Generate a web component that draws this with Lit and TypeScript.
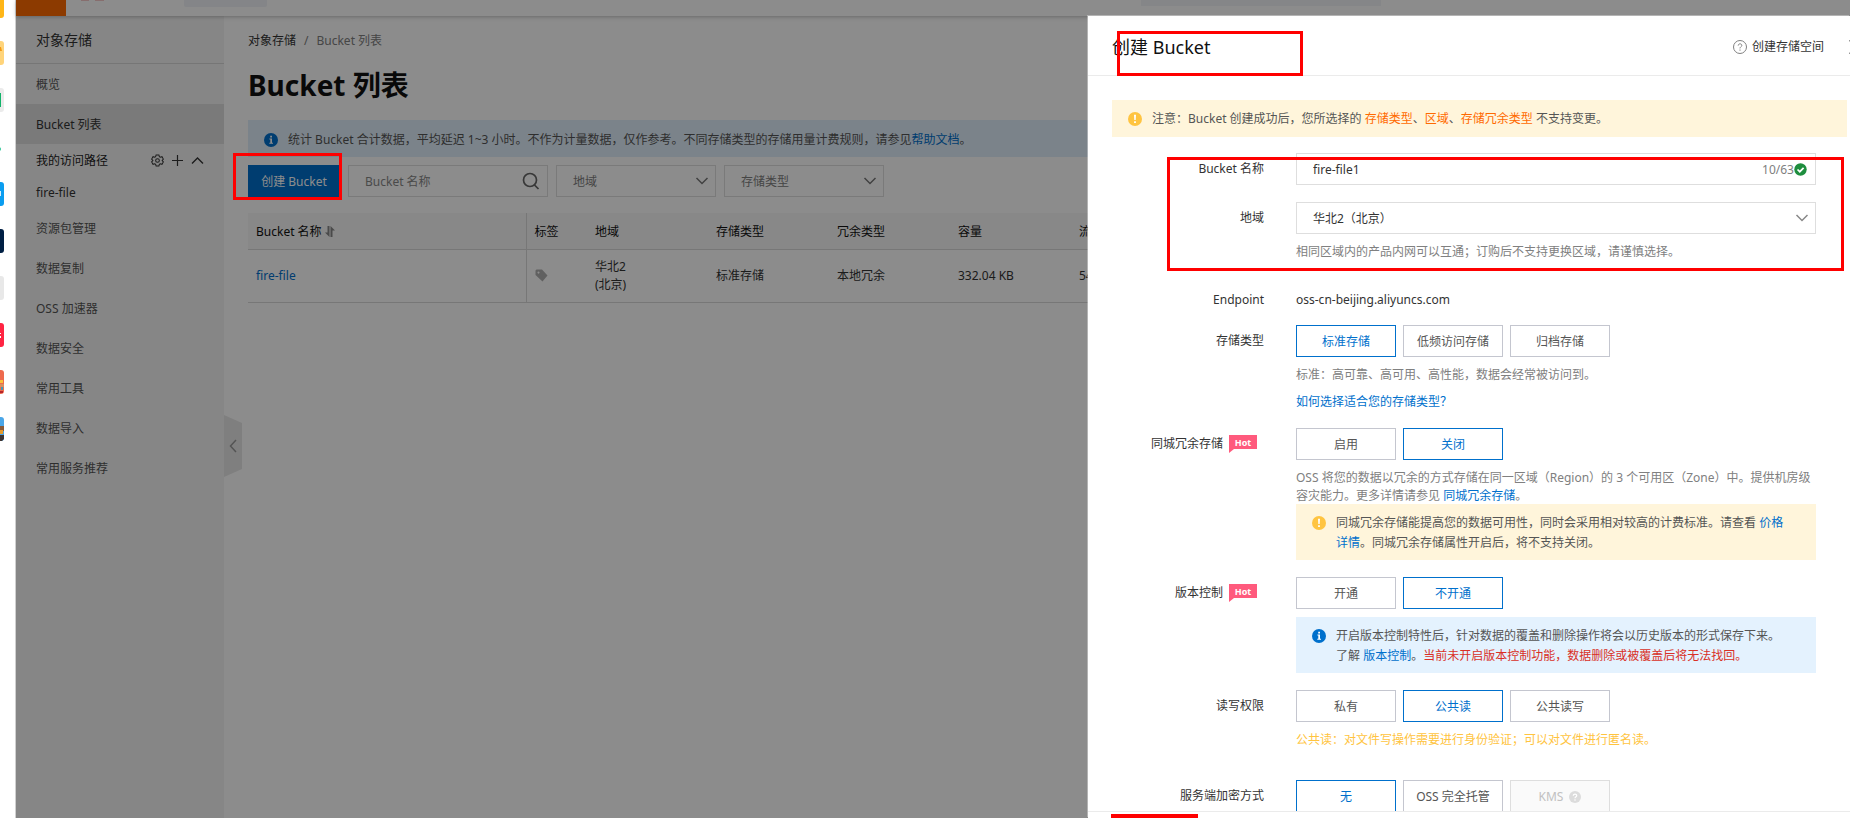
import { LitElement, html, css, svg, nothing } from "lit";
import { customElement, property, state } from "lit/decorators.js";
import { classMap } from "lit/directives/class-map.js";

const base = css`
  *, *::before, *::after { box-sizing: border-box; }
  button, input, select { font: inherit; color: inherit; margin: 0; border-radius: 0; }
  button { background: none; border: 0; padding: 0; cursor: pointer; }
  a { color: #0070cc; text-decoration: none; }
  svg { display: block; flex: none; }
`;

const chevron = (w = 14) => html`<svg width=${w} height="10" viewBox="0 0 14 10" fill="none" stroke="currentColor" stroke-width="1.5"><path d="M1.5 2 7 7.5 12.5 2" /></svg>`;
const infoIcon = html`<svg width="14" height="14" viewBox="0 0 14 14"><circle cx="7" cy="7" r="7" fill="#0070cc" /><path d="M5.4 5.6h2.6v4.2h1v1H5.3v-1h1V6.6h-.9zM6.2 2.8h1.8v1.7H6.2z" fill="#fff" /></svg>`;
const warnIcon = html`<svg width="14" height="14" viewBox="0 0 14 14"><circle cx="7" cy="7" r="7" fill="#ffc440" /><path d="M6 2.8h2L7.7 8H6.3zM6.1 9.2h1.8V11H6.1z" fill="#fff" /></svg>`;

@customElement("dock-strip")
class DockStrip extends LitElement {
  static styles = [base, css`
    :host { display: flex; flex-direction: column; gap: 23px; width: 16px; flex: none; background: #fff; border-right: 1px solid #d0d0d0; overflow: hidden; }
    svg:first-child { margin-top: -6px; }
  `];
  private tiles = [
    svg`<path d="M0 0h1a3 3 0 0 1 3 3v18a3 3 0 0 1-3 3H0z" fill="#ffb617"/>`,
    svg`<path d="M0 0h1a3 3 0 0 1 3 3v18a3 3 0 0 1-3 3H0z" fill="#ffd47a"/><path d="M0 6h1l1 4H0z" fill="#f59a14"/>`,
    svg`<path d="M0 0h1a3 3 0 0 1 3 3v18a3 3 0 0 1-3 3H0z" fill="#ebebeb"/><path d="M0 5h1v14H0z" fill="#12b36a"/>`,
    svg`<circle cx="-1" cy="14" r="2" fill="#36c99c"/>`,
    svg`<path d="M0 0h1a3 3 0 0 1 3 3v18a3 3 0 0 1-3 3H0z" fill="#0a9df0"/><path d="M0 9h1v5H0z" fill="#d6efff"/>`,
    svg`<path d="M0 0h1a3 3 0 0 1 3 3v18a3 3 0 0 1-3 3H0z" fill="#001f44"/>`,
    svg`<path d="M0 0h1a3 3 0 0 1 3 3v18a3 3 0 0 1-3 3H0z" fill="#e8e8e8"/>`,
    svg`<path d="M0 0h1a3 3 0 0 1 3 3v18a3 3 0 0 1-3 3H0z" fill="#ff2442"/><path d="M0 10h1v1H0zM0 13h1v2H0z" fill="#fff"/>`,
    svg`<path d="M0 0h1a3 3 0 0 1 3 3v18a3 3 0 0 1-3 3H0z" fill="#ee6a4d"/><path d="M0 10h3v3H0z" fill="#f9c23b"/><path d="M0 14h4v3H0z" fill="#d98f62"/><path d="M1 17h2v3H1z" fill="#3f9bb8"/><path d="M0 21h3v2H0z" fill="#b5252b"/>`,
    svg`<path d="M0 0h1a3 3 0 0 1 3 3v18a3 3 0 0 1-3 3H0z" fill="#4aa6e8"/><path d="M0 9h4v5H0z" fill="#8a5a38"/><path d="M0 13h3v4H0z" fill="#e59a2c"/><path d="M0 18h4v4l-2 2H0z" fill="#3d3432"/>`,
  ];
  render() {
    return this.tiles.map((t) => html`<svg width="4" height="24" viewBox="0 0 4 24" aria-hidden="true">${t}</svg>`);
  }
}

@customElement("side-nav")
class SideNav extends LitElement {
  static styles = [base, css`
    :host { display: block; width: 208px; flex: none; background: #f5f5f5; color: #555; }
    .product { height: 48px; padding: 0 20px; line-height: 48px; font-size: 14px; color: #333; border-bottom: 1px solid #d8d8d8; }
    .item { display: block; height: 40px; padding: 0 20px; line-height: 42px; color: #555; }
    .item.active { background: #dedede; color: #333; }
    .path { display: flex; align-items: center; height: 33px; padding: 0 20px; color: #222; }
    .path span { flex: 1; }
    .tools { display: flex; gap: 7px; color: #333; }
    .saved { display: block; height: 31px; line-height: 31px; padding: 0 20px; color: #333; }
  `];
  render() {
    const rest = ["资源包管理", "数据复制", "OSS 加速器", "数据安全", "常用工具", "数据导入", "常用服务推荐"];
    return html`
      <div class="product">对象存储</div>
      <nav>
        <a class="item" href="#overview">概览</a>
        <a class="item active" href="#buckets">Bucket 列表</a>
        <div class="path">
          <span>我的访问路径</span>
          <div class="tools">
            <button aria-label="设置"><svg width="13" height="13" viewBox="0 0 14 14" fill="none" stroke="currentColor" stroke-width="1.1"><path d="M5.5 1h3l.5 1.8 1 .6 1.8-.5L13.3 5.500 12 7l1.300 1.500-1.500 2.600-1.800-.5-1 .6-.5 1.800h-3L5 11.200l-1-.6-1.800.5L.7 8.500 2 7 .7 5.500l1.500-2.600 1.800.5 1-.6z"/><circle cx="7" cy="7" r="2"/></svg></button>
            <button aria-label="添加"><svg width="13" height="13" viewBox="0 0 13 13" stroke="currentColor" stroke-width="1.2"><path d="M6.500 1v11M1 6.500h11"/></svg></button>
            <button aria-label="收起"><svg width="13" height="13" viewBox="0 0 13 13" fill="none" stroke="currentColor" stroke-width="1.400"><path d="M1 9.500 6.500 4 12 9.500"/></svg></button>
          </div>
        </div>
        <a class="saved" href="#fire-file">fire-file</a>
        ${rest.map((r) => html`<a class="item" href="#nav">${r}</a>`)}
      </nav>`;
  }
}

@customElement("bucket-list")
class BucketList extends LitElement {
  static styles = [base, css`
    :host { display: block; flex: 1; min-width: 0; background: #fff; color: #333; padding: 0 24px; overflow: hidden; }
    .crumbs { display: flex; gap: 8px; padding-top: 16px; line-height: 18px; }
    .crumbs a { color: #333; }
    .crumbs span { color: #808080; }
    h1 { margin: 16px 0 16px; font-size: 28px; line-height: 38px; color: #111; font-weight: 700; }
    .banner { display: flex; align-items: center; gap: 10px; height: 37px; padding: 2px 16px 0; background: #e1effb; color: #555; white-space: nowrap; }
    .toolbar { display: flex; gap: 8px; margin-top: 8px; }
    .create { width: 92px; height: 32px; padding-top: 2px; background: #0070cc; color: #fff; }
    .search { display: flex; align-items: center; width: 200px; height: 32px; border: 1px solid #dedede; padding: 0 7px 0 16px; }
    .search input { flex: 1; min-width: 0; border: 0; outline: 0; padding: 2px 0 0; background: none; }
    .search input::placeholder { color: #888; opacity: 1; }
    .pick { display: grid; width: 160px; height: 32px; align-items: center; color: #777; }
    .pick > * { grid-area: 1 / 1; }
    .pick select { appearance: none; width: 100%; height: 32px; border: 1px solid #dedede; background: none; padding: 2px 16px 0; color: #808080; }
    .pick svg { justify-self: end; margin-right: 7px; pointer-events: none; }
    table { margin-top: 16px; width: 1200px; table-layout: fixed; border-collapse: collapse; line-height: 18px; }
    th { height: 36px; background: #f7f7f7; text-align: left; font-weight: 400; padding: 2px 8px 0; border-bottom: 1px solid #d9d9d9; color: #111; }
    td { height: 53px; padding: 0 8px; border-bottom: 1px solid #d9d9d9; }
    .name { width: 278px; border-right: 1px solid #d9d9d9; }
    .tag { width: 61px; }
    .tag svg { color: #b0b0b0; }
    .sort { display: flex; align-items: center; gap: 3px; }
    .col { width: 121px; }
  `];
  render() {
    return html`
      <div class="crumbs"><a href="#oss">对象存储</a><span>/</span><span>Bucket 列表</span></div>
      <h1>Bucket 列表</h1>
      <div class="banner">${infoIcon}<span>统计 Bucket 合计数据，平均延迟 1~3 小时。不作为计量数据，仅作参考。不同存储类型的存储用量计费规则，请参见<a href="#help">帮助文档</a>。</span></div>
      <div class="toolbar">
        <button class="create">创建 Bucket</button>
        <div class="search"><input aria-label="Bucket 名称" placeholder="Bucket 名称" />
          <svg width="18" height="18" viewBox="0 0 18 18" fill="none" stroke="#666" stroke-width="1.700"><circle cx="8" cy="8" r="6.500"/><path d="m12.500 13 4 4"/></svg></div>
        <div class="pick"><select aria-label="地域"><option>地域</option></select>${chevron()}</div>
        <div class="pick"><select aria-label="存储类型"><option>存储类型</option></select>${chevron()}</div>
      </div>
      <table>
        <thead><tr>
          <th class="name"><span class="sort">Bucket 名称 <svg width="10" height="11" viewBox="0 0 10 11" fill="#888"><path d="M2.500 0h2v11L0 6.500h2.500zM5.500 0 10 4.500H7.500V11h-2z"/></svg></span></th>
          <th class="tag">标签</th><th class="col">地域</th><th class="col">存储类型</th><th class="col">冗余类型</th><th class="col">容量</th><th>流量</th>
        </tr></thead>
        <tbody><tr>
          <td class="name"><a href="#fire-file">fire-file</a></td>
          <td class="tag"><svg width="13" height="13" viewBox="0 0 13 13" fill="currentColor" fill-rule="evenodd"><path d="M1.500.5H7L12.500 6.500 7.500 12.500 0.500 6V1.500zM3.500 2.500a1 1 0 1 0 .01 0z"/></svg></td>
          <td>华北2<br />(北京)</td><td>标准存储</td><td>本地冗余</td><td>332.04 KB</td><td>54.10 KB</td>
        </tr></tbody>
      </table>`;
  }
}

@customElement("choice-group")
class ChoiceGroup extends LitElement {
  static styles = [base, css`
    .group { display: flex; gap: 7px; }
    button { display: flex; align-items: center; justify-content: center; gap: 6px; min-width: 100px; height: 32px; padding: 2px 12px 0; border: 1px solid #c4c6cf; color: #555; background: #fff; white-space: nowrap; }
    .on { border-color: #0070cc; color: #0070cc; }
    button:disabled { background: #fafafa; border-color: #dedede; color: #c1c1c1; cursor: not-allowed; }
  `];
  @property() label = "";
  @property({ attribute: false }) options: string[] = [];
  @property() value = "";
  @property() off = "";
  render() {
    return html`<div class="group" role="group" aria-label=${this.label}>${this.options.map((o) => html`
      <button class=${classMap({ on: o === this.value })} aria-pressed=${o === this.value} ?disabled=${o === this.off} @click=${() => (this.value = o)}>${o}${o === this.off ? html`
        <svg width="12" height="12" viewBox="0 0 12 12"><circle cx="6" cy="6" r="6" fill="#dcdcdc"/><path d="M4.300 4.800C4.300 2.600 7.800 2.700 7.700 4.700 7.700 5.700 6 5.900 6 7.300" fill="none" stroke="#fff" stroke-width="1.200"/><circle cx="6" cy="9" r=".8" fill="#fff"/></svg>` : nothing}</button>`)}</div>`;
  }
}

@customElement("create-drawer")
class CreateDrawer extends LitElement {
  static styles = [base, css`
    :host { display: flex; flex-direction: column; background: #fff; color: #333; box-shadow: -1px -1px 0 rgba(255, 255, 255, .35); }
    header { display: flex; align-items: center; flex: none; height: 60px; padding: 2px 0 0 24px; border-bottom: 1px solid #ebebeb; overflow: hidden; }
    h2 { flex: 1; margin: 0; font-size: 18px; font-weight: 400; line-height: 24px; color: #111; }
    .help { display: flex; align-items: center; gap: 5px; color: #333; }
    .close { width: 1px; margin-left: 25px; overflow: hidden; color: #999; }
    .body { flex: 1; min-height: 0; overflow: hidden; padding: 24px 3px 0 24px; }
    .note { display: flex; gap: 10px; padding: 9px 24px 7px 16px; line-height: 20px; color: #555; }
    .note svg { margin-top: 3px; }
    .warn { background: #fff5db; }
    .info { background: #e4f2fe; }
    .top { height: 37px; }
    .hot-text { color: #ff6a00; }
    .danger { color: #d93026; }
    form { display: flex; flex-direction: column; gap: 17px; padding: 16px 31px 0 0; }
    .row { display: grid; grid-template-columns: 152px minmax(0, 1fr); column-gap: 32px; }
    .label { text-align: right; line-height: 32px; }
    .row.plain { line-height: 16px; }
    .plain .label { line-height: 16px; }
    .spaced { padding-bottom: 15px; }
    .field { display: flex; align-items: center; height: 32px; border: 1px solid #dedede; padding: 0 8px 0 16px; color: #808080; }
    .field input { flex: 1; min-width: 0; border: 0; outline: 0; padding: 2px 0 0; color: #333; background: none; }
    .field span { padding-top: 2px; }
    .pick { display: grid; align-items: center; color: #888; }
    .pick > * { grid-area: 1 / 1; }
    .pick select { appearance: none; width: 100%; height: 32px; border: 1px solid #dedede; background: none; padding: 2px 16px 0; color: #333; }
    .pick svg { justify-self: end; margin-right: 7px; pointer-events: none; }
    .hint { margin: 9px 0 -1px; line-height: 18px; color: #808080; }
    .link { margin: 10px 0 0; line-height: 18px; }
    .public { color: #ffc440; }
    .gap { margin-top: 8px; }
    .badged { display: flex; justify-content: flex-end; align-items: flex-start; gap: 6px; padding-right: 7px; }
    .badge { height: 14px; width: 28px; margin-top: 7px; background: #ff5a7d; color: #fff; font-size: 9px; font-weight: 700; line-height: 15px; text-align: center; }
    .badge::after { content: ""; display: block; width: 5px; height: 4px; margin-top: -1px; background: #ff5a7d; clip-path: polygon(0 0, 100% 0, 0 100%); }
    footer { flex: none; height: 7px; border-top: 1px solid #ebebeb; background: #fff; }
    .mark { position: absolute; border: 3px solid #f00; pointer-events: none; }
    .m-title { left: 29px; top: 15px; width: 186px; height: 45px; }
    .m-form { left: 79px; right: 6px; top: 141px; height: 114px; }
    .m-foot { left: 23px; bottom: 0; width: 87px; height: 4px; border: 0; background: #f00; }
  `];
  @state() private name = "fire-file1";
  render() {
    return html`
      <header>
        <h2>创建 Bucket</h2>
        <a class="help" href="#help"><svg width="14" height="14" viewBox="0 0 14 14" fill="none" stroke="#808080"><circle cx="7" cy="7" r="6.500"/><path d="M5.200 5.600c0-2.400 3.700-2.300 3.600-.1C8.800 6.700 7 6.800 7 8.400M7 9.500v1.200"/></svg>创建存储空间</a>
        <button class="close" aria-label="关闭"><svg width="14" height="14" viewBox="0 0 14 14" stroke="currentColor" stroke-width="1.500"><path d="m0 0 14 14M14 0 0 14"/></svg></button>
      </header>
      <div class="body">
        <div class="note warn top">${warnIcon}<span>注意：Bucket 创建成功后，您所选择的 <span class="hot-text">存储类型</span>、<span class="hot-text">区域</span>、<span class="hot-text">存储冗余类型</span> 不支持变更。</span></div>
        <form @submit=${(e: Event) => e.preventDefault()}>
          <div class="row">
            <label class="label" for="name">Bucket 名称</label>
            <div class="field"><input id="name" .value=${this.name} maxlength="63" @input=${(e: InputEvent) => (this.name = (e.target as HTMLInputElement).value)} /><span>${this.name.length}/63</span>
              <svg width="13" height="13" viewBox="0 0 13 13"><circle cx="6.500" cy="6.500" r="6.200" fill="#1e8e3e"/><path d="m3.500 6.500 2.300 2.200L9.600 4.900" fill="none" stroke="#fff" stroke-width="1.700"/></svg></div>
          </div>
          <div class="row spaced">
            <label class="label" for="region">地域</label>
            <div><div class="pick"><select id="region"><option>华北2（北京）</option></select>${chevron()}</div>
              <p class="hint">相同区域内的产品内网可以互通；订购后不支持更换区域，请谨慎选择。</p></div>
          </div>
          <div class="row plain"><span class="label">Endpoint</span><span>oss-cn-beijing.aliyuncs.com</span></div>
          <div class="row">
            <span class="label">存储类型</span>
            <div><choice-group label="存储类型" .options=${["标准存储", "低频访问存储", "归档存储"]} value="标准存储"></choice-group>
              <p class="hint">标准：高可靠、高可用、高性能，数据会经常被访问到。</p>
              <p class="link"><a href="#types">如何选择适合您的存储类型？</a></p></div>
          </div>
          <div class="row">
            <span class="label badged">同城冗余存储<span class="badge">Hot</span></span>
            <div><choice-group label="同城冗余存储" .options=${["启用", "关闭"]} value="关闭"></choice-group>
              <p class="hint">OSS 将您的数据以冗余的方式存储在同一区域（Region）的 3 个可用区（Zone）中。提供机房级容灾能力。更多详情请参见 <a href="#zrs">同城冗余存储</a>。</p>
              <div class="note warn">${warnIcon}<span>同城冗余存储能提高您的数据可用性，同时会采用相对较高的计费标准。请查看 <a href="#price">价格详情</a>。同城冗余存储属性开启后，将不支持关闭。</span></div></div>
          </div>
          <div class="row">
            <span class="label badged">版本控制<span class="badge">Hot</span></span>
            <div><choice-group label="版本控制" .options=${["开通", "不开通"]} value="不开通"></choice-group>
              <div class="note info gap">${infoIcon}<span>开启版本控制特性后，针对数据的覆盖和删除操作将会以历史版本的形式保存下来。<br />了解 <a href="#version">版本控制</a>。<span class="danger">当前未开启版本控制功能，数据删除或被覆盖后将无法找回。</span></span></div></div>
          </div>
          <div class="row spaced">
            <span class="label">读写权限</span>
            <div><choice-group label="读写权限" .options=${["私有", "公共读", "公共读写"]} value="公共读"></choice-group>
              <p class="hint public">公共读：对文件写操作需要进行身份验证；可以对文件进行匿名读。</p></div>
          </div>
          <div class="row">
            <span class="label">服务端加密方式</span>
            <choice-group label="服务端加密方式" .options=${["无", "OSS 完全托管", "KMS"]} value="无" off="KMS"></choice-group>
          </div>
        </form>
      </div>
      <footer></footer>
      <div class="mark m-title"></div>
      <div class="mark m-form"></div>
      <div class="mark m-foot"></div>`;
  }
}

@customElement("app-root")
class AppRoot extends LitElement {
  static styles = [base, css`
    :host { display: flex; height: 100vh; overflow: hidden; background: #fff; font: 12px/18px "Noto Sans", "Noto Sans CJK SC", sans-serif; }
    .console { position: relative; flex: 1; min-width: 0; display: flex; flex-direction: column; }
    .topbar { display: flex; align-items: flex-start; flex: none; height: 16px; background: #fff; box-shadow: 0 1px 4px rgba(0, 0, 0, .25); z-index: 1; }
    .menu { width: 50px; height: 16px; background: #ff6a00; }
    .brand { margin-left: 15px; }
    .scope { width: 83px; height: 7px; margin-left: 80px; background: #f0f3f7; border-radius: 0 0 2px 2px; }
    .find { width: 240px; height: 6px; margin-left: auto; margin-right: 469px; background: #f2f4f7; }
    .page { display: flex; flex: 1; min-height: 0; }
    .fold { position: absolute; left: 208px; top: 415px; width: 18px; height: 62px; display: flex; align-items: center; justify-content: center; background: #e8e8e8; color: #999; clip-path: polygon(0 0, 100% 13%, 100% 87%, 0 100%); }
    .mask { position: absolute; inset: 0; background: rgba(0, 0, 0, .45); z-index: 2; }
    create-drawer { position: absolute; top: 16px; right: 0; bottom: 0; width: 762px; max-width: 100%; z-index: 3; }
    .mark { position: absolute; left: 217px; top: 153px; width: 109px; height: 47px; border: 3px solid #f00; z-index: 2; pointer-events: none; }
  `];
  render() {
    return html`
      <dock-strip></dock-strip>
      <div class="console">
        <div class="topbar"><div class="menu"></div><svg class="brand" width="23" height="1" viewBox="0 0 23 1" fill="#f6c9c9" aria-hidden="true"><path d="M0 0h8v1H0zM14 0h9v1h-9z"/></svg><div class="scope"></div><div class="find"></div></div>
        <div class="page"><side-nav></side-nav><bucket-list></bucket-list></div>
        <button class="fold" aria-label="收起导航"><svg width="8" height="14" viewBox="0 0 8 14" fill="none" stroke="currentColor" stroke-width="1.500"><path d="M7 1 1.500 7 7 13"/></svg></button>
        <div class="mask"></div>
        <div class="mark"></div>
        <create-drawer></create-drawer>
      </div>`;
  }
}
